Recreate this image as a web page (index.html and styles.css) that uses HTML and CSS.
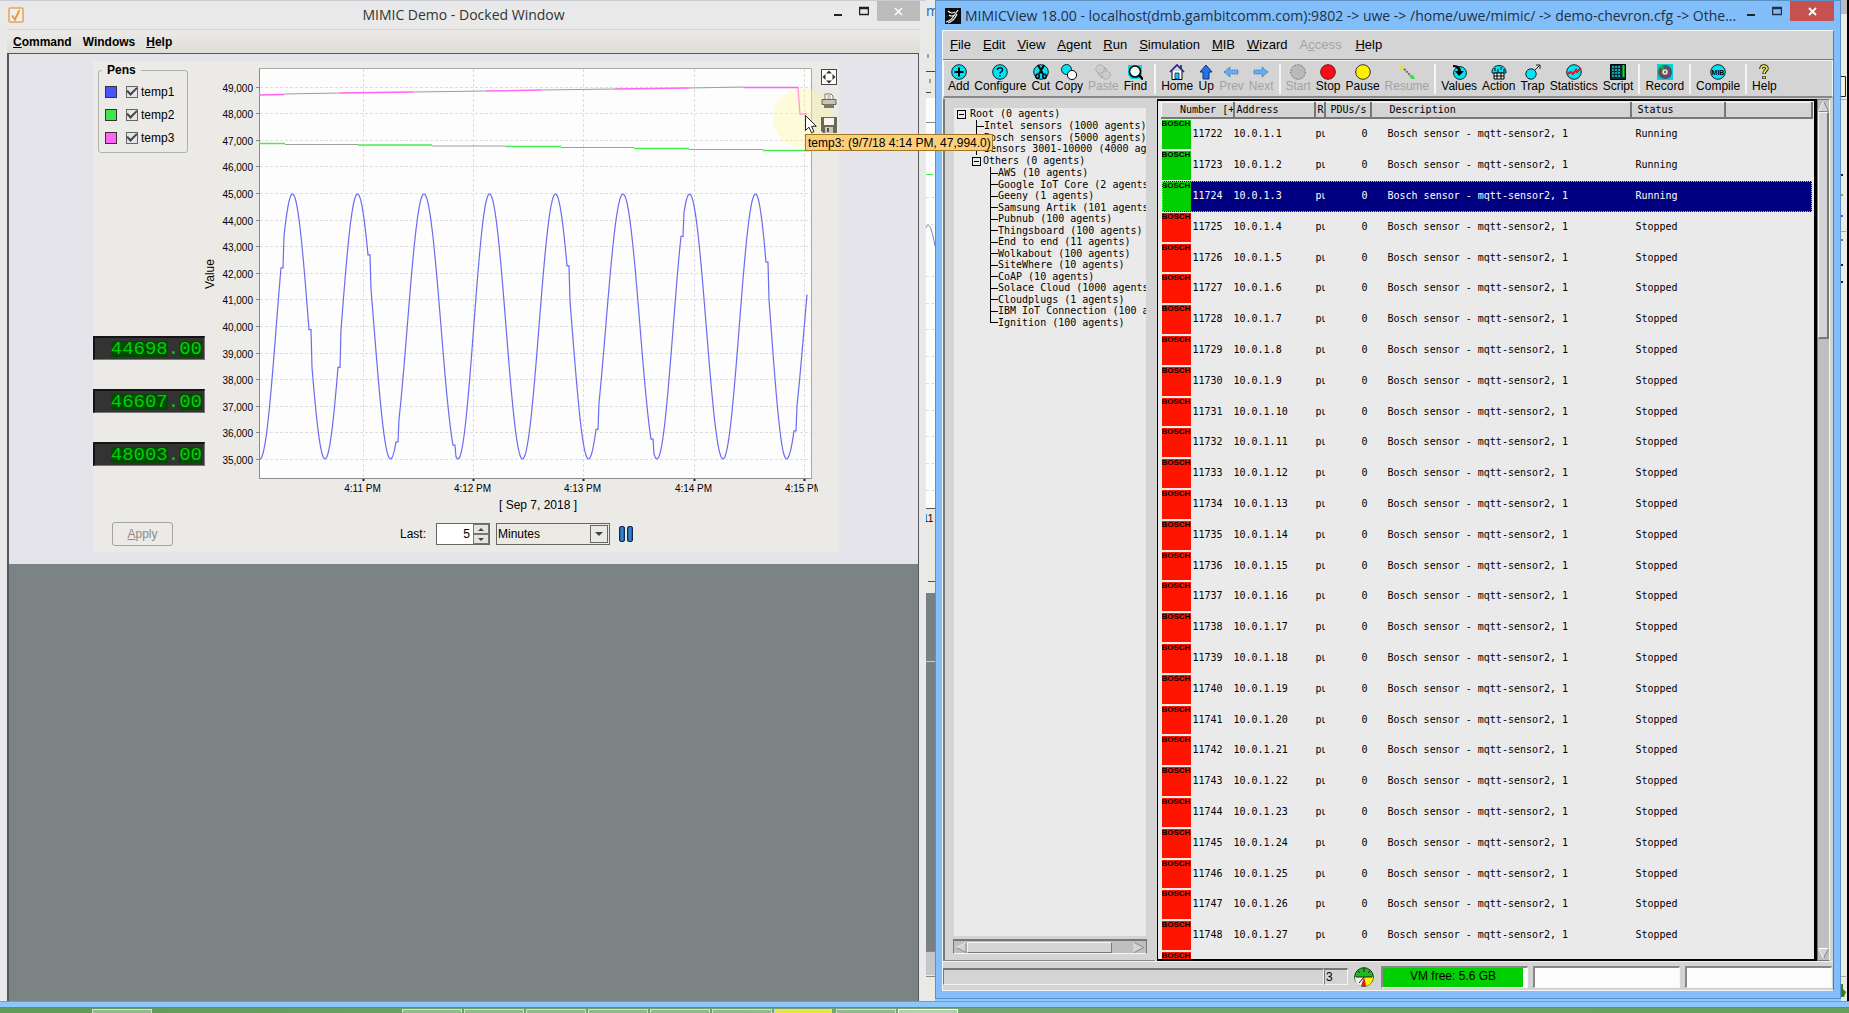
FILE: index.html
```html
<!DOCTYPE html>
<html lang="en">
<head>
<meta charset="utf-8">
<title>MIMICView desktop</title>
<link rel="stylesheet" href="styles.css">
</head>
<body>
<div class="desktop">
  <section class="win demo">
    <header class="titlebar demo-title">
      <svg class="app-icon" width="16" height="16" viewBox="0 0 16 16"><rect x="1" y="1" width="14" height="14" rx="1" fill="#eef0f4" stroke="#eba24e" stroke-width="1.5"/><path d="M4 8.500l3 4L11.500 3" fill="none" stroke="#f29a32" stroke-width="2"/></svg>
      <h1 class="demo-name">MIMIC Demo - Docked Window</h1>
      <div class="win-buttons">
        <button class="wb" aria-label="Minimize"><svg width="10" height="12"><rect x="1" y="9" width="8" height="2" fill="#222"/></svg></button>
        <button class="wb" aria-label="Maximize"><svg width="10" height="12"><path d="M.5 3.500h9v6h-9zM0 2.500h10" fill="none" stroke="#222" stroke-width="1.500"/></svg></button>
        <button class="wb close gray" aria-label="Close"><svg width="9" height="9"><path d="M1 1l7 7M8 1l-7 7" stroke="#fff" stroke-width="1.500"/></svg></button>
      </div>
    </header>
    <nav class="demo-menu"><a href="#"><u>C</u>ommand</a><a href="#">Windows</a><a href="#"><u>H</u>elp</a></nav>
    <main class="demo-body">
      <div class="dock">
        <div class="panel">
          <div class="side">
            <fieldset class="pens">
              <legend>Pens</legend>
              <label><i class="swatch blue"></i><input type="checkbox" checked>temp1</label>
              <label><i class="swatch green"></i><input type="checkbox" checked>temp2</label>
              <label><i class="swatch pink"></i><input type="checkbox" checked>temp3</label>
            </fieldset>
            <div class="meters">
              <output class="lcd"><span>44698</span>.<span>00</span></output>
              <output class="lcd"><span>46607</span>.<span>00</span></output>
              <output class="lcd"><span>48003</span>.<span>00</span></output>
            </div>
          </div>
          <svg class="chart" width="618" height="454" viewBox="0 0 618 454">
            <rect x="59" y="7" width="552" height="411" fill="#fdfdfd"/>
            <g id="grid"></g>
            <path d="M59.500 7v411M59 417.500h553" stroke="#8c8c8c" fill="none"/>
            <path d="M59 7.500h552.500v410" stroke="#aaa" fill="none"/>
            <path d="M84 33l55-1M213 31l73-1M341 29l74-1M489 27l55-1M85 83.500h73M232 85h73M361 86.500h73M489 88.500h74" stroke="#9d9d9d" fill="none"/>
            <path d="M59 34l25-.500M139 32l74-1M286 30l55-1M415 28l74-1M544 26.500h54l2 26.500h7" stroke="#ff62f4" stroke-width="1.300" fill="none"/>
            <path d="M59 82.500h26M158 84h74M305 85.500h56M434 87.500h55M563 89.500h46" stroke="#47ee52" stroke-width="1.500" fill="none"/>
            <polyline id="trace" fill="none" stroke="#6b6bf2" stroke-width="1.200"/>
            <g id="labels"></g>
            <text class="axis-title" transform="translate(14 213) rotate(-90)">Value</text>
            <text class="axis-title" x="338" y="448">[ Sep 7, 2018 ]</text>
          </svg>
          <div class="tools">
            <i class="halo"></i>
            <button aria-label="Zoom to fit"><svg width="16" height="16"><rect x=".5" y=".5" width="15" height="15" fill="#fff" stroke="#444"/><path d="M8 1.500l3 3H5zM8 14.500l3-3H5zM1.500 8l3-3v6zM14.500 8l-3-3v6z" fill="#333"/></svg></button>
            <button aria-label="Print"><svg width="16" height="16"><path d="M4 7V1h6l2 2v4" fill="#fff" stroke="#77775f"/><path d="M6 3h4M6 5h4" stroke="#999"/><path d="M1 6.500h14v5H1z" fill="#c6c6b2" stroke="#66664f"/><path d="M3 11h10v4H3z" fill="#7a7a64"/></svg></button>
            <button aria-label="Save"><svg width="16" height="16"><path d="M0 0h16v16H2l-2-2z" fill="#6a6955"/><path d="M3 1h10v7H3z" fill="#f6f6ef"/><path d="M4 10h8v6H4z" fill="#c7c7ba"/><path d="M6 11h2v4H6z" fill="#555546"/></svg></button>
            <svg class="pointer" width="12" height="19"><path d="M.5.500v15l3.500-3.300 2.500 5.500 2.500-1.100-2.500-5.300h4.800z" fill="#fff" stroke="#222"/></svg>
            <div class="tip" role="tooltip">temp3: (9/7/18 4:14 PM, 47,994.0)</div>
          </div>
          <div class="controls">
            <button class="apply" disabled><u>A</u>pply</button>
            <label class="last" for="span">Last:</label>
            <span class="spinner"><input id="span" type="text" value="5"><span class="steps"><button aria-label="More"><i class="tri-up"></i></button><button aria-label="Less"><i class="tri-down"></i></button></span></span>
            <span class="combo"><select aria-label="Unit"><option>Minutes</option></select><b><i class="tri-down"></i></b></span>
            <button class="pause" aria-label="Pause"><svg width="14" height="16"><defs><linearGradient id="pb"><stop offset="0" stop-color="#124a86"/><stop offset=".5" stop-color="#3f8fd8"/><stop offset="1" stop-color="#124a86"/></linearGradient></defs><rect x=".5" y=".5" width="5" height="15" rx="1.500" fill="url(#pb)" stroke="#0d2a55"/><rect x="8.500" y=".5" width="5" height="15" rx="1.500" fill="url(#pb)" stroke="#0d2a55"/></svg></button>
          </div>
        </div>
      </div>
    </main>
  </section>

  <div class="behind">
    <svg width="9" height="1001">
      <rect width="9" height="1001" fill="#eae9e4"/><rect width="9" height="22" fill="#e9eaec"/>
      <text class="frag" x="0" y="16">m</text>
      <path d="M0 71.500h9M0 92.500h5" stroke="#444"/><path d="M2 54v4M4 79v4" stroke="#555"/>
      <rect y="98" width="9" height="410" fill="#fdfdfd"/><path d="M0 122.500h9" stroke="#888"/>
      <path d="M0 197.500h9M0 224.500h9M0 276.500h9M0 303.500h9M0 329.500h9M0 356.500h9M0 383.500h9M0 410.500h9M0 436.500h9M0 463.500h9M0 490.500h9" stroke="#ddd" stroke-dasharray="3 2"/>
      <path d="M0 174.500h7" stroke="#47ee52"/><path d="M0 228c2-6 5-4 9 18" stroke="#77b" fill="none"/>
      <path d="M0 508.500h9" stroke="#555"/><text class="frag-axis" x="-3" y="522">11</text><path d="M2 581.500h7" stroke="#555"/>
      <rect y="593" width="9" height="358" fill="#778082"/><path d="M0 661.500h9" stroke="#ccc"/>
      <rect y="951" width="9" height="24" fill="#c5c6c7"/><path d="M0 951.500h9M0 976.500h9" stroke="#888"/>
    </svg>
  </div>

  <section class="win view">
    <header class="titlebar view-title">
      <svg class="app-icon" width="16" height="16"><rect width="16" height="16" fill="#0a0a0a"/><path d="M1 14c6-2 7-5 12-12M3 15c5-2 7-4 9-9M3 3c3 3 5 2 7 1M4 7c2 2 4 1 6 0" stroke="#f2f2f2" fill="none" stroke-width="1.200"/></svg>
      <h1>MIMICView 18.00 - localhost(dmb.gambitcomm.com):9802 -&gt; uwe -&gt; /home/uwe/mimic/ -&gt; demo-chevron.cfg -&gt; Othe...</h1>
      <div class="win-buttons">
        <button class="wb" aria-label="Minimize"><svg width="10" height="12"><rect x="1" y="9" width="8" height="2" fill="#222"/></svg></button>
        <button class="wb" aria-label="Maximize"><svg width="10" height="12"><path d="M.5 3.500h9v6h-9zM0 2.500h10" fill="none" stroke="#234" stroke-width="1.500"/></svg></button>
        <button class="wb close red" aria-label="Close"><svg width="9" height="9"><path d="M1 1l7 7M8 1l-7 7" stroke="#fff" stroke-width="1.800"/></svg></button>
      </div>
    </header>
    <div class="view-body">
      <nav class="view-menu"><a href="#"><u>F</u>ile</a><a href="#"><u>E</u>dit</a><a href="#"><u>V</u>iew</a><a href="#"><u>A</u>gent</a><a href="#"><u>R</u>un</a><a href="#"><u>S</u>imulation</a><a href="#"><u>M</u>IB</a><a href="#"><u>W</u>izard</a><a href="#" class="off">A<u>c</u>cess</a><a href="#"><u>H</u>elp</a></nav>
      <div class="toolbar">
        <button><svg><circle cx="8" cy="8" r="7.300" class="cy"/><path d="M8 3.500v9M3.500 8h9" stroke="#000" stroke-width="2"/></svg>Add</button>
        <button><svg><circle cx="8" cy="8" r="7.300" class="cy"/><path d="M5.500 6c0-3 5-3 5 0 0 1.600-2.500 1.700-2.500 3.500M8 11v1.600" fill="none" stroke="#013" stroke-width="1.600"/></svg>Configure</button>
        <button><svg><circle cx="8" cy="8" r="7.300" class="cy"/><path d="M5 1l5 9M11 1L6 10M8 5v4" stroke="#000" stroke-width="2"/><path d="M4.500 10a1.800 2.200 0 1 0 .1 0M11.500 10a1.800 2.200 0 1 0 .1 0" fill="#0bd" stroke="#000" stroke-width="1.500"/></svg>Cut</button>
        <button><svg><circle cx="5.500" cy="5.500" r="5" class="cy"/><circle cx="11" cy="11" r="4.600" fill="#fff" stroke="#000"/></svg>Copy</button>
        <button class="off"><svg><g fill="#ccc" stroke="#999" stroke-dasharray="1.500 1"><circle cx="5" cy="5" r="4.200"/><circle cx="11" cy="11" r="4.200"/></g><path d="M3 9l4 5M9 3l3 3" stroke="#999"/></svg>Paste</button>
        <button><svg><path d="M1 1h14v10l-3 4H4l-3-4z" fill="#00d9e8"/><circle cx="8" cy="7.500" r="5.500" fill="#eff" stroke="#000" stroke-width="1.600"/><path d="M12 11l4 4.500" stroke="#000" stroke-width="2.500"/></svg>Find</button>
        <hr class="first-sep">
        <button><svg><path d="M3 7v8.500h10V7" fill="#fff" stroke="#000"/><path d="M1 8l7-7 7 7M12 1v4" fill="none" stroke="#22228a" stroke-width="1.700"/><path d="M6 9h4v6H6z" fill="#0cf" stroke="#224" stroke-width=".8"/></svg>Home</button>
        <button><svg><path d="M8 1l6 7h-3v7H5V8H2z" fill="#2772e8" stroke="#102e7c"/></svg>Up</button>
        <button class="off"><svg><path d="M1 8l6-5v3h8v4H7v3z" fill="#65adf5" stroke="#4673b8" stroke-dasharray="1.500 1"/></svg>Prev</button>
        <button class="off"><svg><path d="M15 8L9 3v3H1v4h8v3z" fill="#65adf5" stroke="#4673b8" stroke-dasharray="1.500 1"/></svg>Next</button>
        <hr>
        <button class="off"><svg><circle cx="8" cy="8" r="7.300" fill="#b9b9b9" stroke="#777" stroke-dasharray="2 1"/></svg>Start</button>
        <button><svg><circle cx="8" cy="8" r="7.300" fill="#fa0d1b" stroke="#7c0a10"/></svg>Stop</button>
        <button><svg><circle cx="8" cy="8" r="7.300" fill="#fff000" stroke="#333"/></svg>Pause</button>
        <button class="off"><svg><path d="M3 1v6M0 4h6M1 2l4 4M5 2L1 6" stroke="#efe022"/><path d="M5 5l7 7" stroke="#666" stroke-dasharray="2 1" stroke-width="2"/><path d="M10 11h4l2 4h-4z" fill="#3ce04c"/></svg>Resume</button>
        <hr>
        <button><svg><circle cx="9" cy="9" r="6.400" class="cy"/><path d="M2 1c6 0 8 3 8 6h3l-5 5-4-5h3c0-2-2-4-5-4z" fill="#000"/></svg>Values</button>
        <button><svg><path d="M1 9c-1-10 15-10 14 0z" class="cy"/><path d="M3 9h10v6H3z" fill="#eee" stroke="#000"/><path d="M6 9v6M10 9v6M3 12h10M4 4v3M7 5v3M10 3v3M13 5v3" stroke="#000"/></svg>Action</button>
        <button><svg><circle cx="6" cy="10" r="5.200" class="cy"/><path d="M10 6l5-5M11 1h4v4" fill="none" stroke="#222"/></svg>Trap</button>
        <button><svg><circle cx="8" cy="8" r="7.300" class="cy"/><path d="M1 10l4-2 2 2 3-4 1 2 4-4" fill="none" stroke="#e8152b" stroke-width="2"/></svg>Statistics</button>
        <button><svg><path d="M.5.500h15v15H.5z" fill="#08283a" stroke="#000"/><path d="M2 3h9M2 6h9M2 9h9M2 12h9" stroke="#00d6d6" stroke-width="1.500" stroke-dasharray="2 1"/><path d="M13.500 1v12" stroke="#0e0" stroke-width="2"/></svg>Script</button>
        <hr>
        <button><svg><path d="M0 0h16v16H0z" fill="#00cfdc"/><circle cx="8" cy="8" r="7" fill="#555"/><path d="M8 8L2 3l4-2z" fill="#1aab2f"/><path d="M8 8l6 4-2 2z" fill="#8b2fae"/><circle cx="8" cy="8" r="2.800" fill="#ddd"/><circle cx="8" cy="8" r="1" fill="#444"/></svg>Record</button>
        <hr>
        <button><svg><circle cx="8" cy="8" r="7.300" class="cy"/><text x="8" y="11" class="mib">MIB</text></svg>Compile</button>
        <hr>
        <button><svg><path d="M5 5c0-4 6-4 6-.500 0 2-3 2-3 5.500M8 12v3" fill="none" stroke="#222" stroke-width="3.500"/><path d="M5 5c0-4 6-4 6-.500 0 2-3 2-3 5M8 12.500v2" fill="none" stroke="#fff04a" stroke-width="1.600"/></svg>Help</button>
      </div>
      <div class="panes">
        <aside class="tree-pane">
          <div class="tree-canvas">
            <ul class="tree">
              <li><div class="root"><i class="fold"></i>Root (0 agents)</div>
                <ul>
                  <li>Intel sensors (1000 agents)</li>
                  <li>Bosch sensors (5000 agents)</li>
                  <li>Sensors 3001-10000 (4000 agents)</li>
                  <li class="open"><div class="branch"><i class="fold"></i>Others (0 agents)</div>
                    <ul>
                      <li>AWS (10 agents)</li><li>Google IoT Core (2 agents)</li><li>Geeny (1 agents)</li><li>Samsung Artik (101 agents)</li><li>Pubnub (100 agents)</li><li>Thingsboard (100 agents)</li><li>End to end (11 agents)</li><li>Wolkabout (100 agents)</li><li>SiteWhere (10 agents)</li><li>CoAP (10 agents)</li><li>Solace Cloud (1000 agents)</li><li>Cloudplugs (1 agents)</li><li>IBM IoT Connection (100 agents)</li><li>Ignition (100 agents)</li>
                    </ul>
                  </li>
                </ul>
              </li>
            </ul>
          </div>
          <div class="hbar"><svg width="12" height="11"><path d="M11 .5v10L1 5.500z" fill="#d4d4d4" stroke="#888"/><path d="M11 .5L1 5.500" stroke="#fff"/></svg><i class="hthumb"></i><svg width="12" height="11"><path d="M1 .5v10l10-5z" fill="#d4d4d4" stroke="#888"/><path d="M1 10V.5" stroke="#fff"/></svg></div>
        </aside>
        <div class="list">
          <table>
            <colgroup><col class="c-logo"><col class="c-num"><col class="c-addr"><col class="c-r"><col class="c-pdu"><col class="c-desc"><col class="c-stat"><col></colgroup>
            <thead><tr><th colspan="2" class="h-num">Number [+</th><th>Address</th><th>R</th><th class="right">PDUs/s</th><th class="h-desc">Description</th><th class="h-stat">Status</th><th></th></tr></thead>
            <tbody id="agents"></tbody>
          </table>
        </div>
        <div class="vbar"><svg width="11" height="11"><path d="M5.500 .5l5 10H.5z" fill="#d4d4d4" stroke="#888"/><path d="M5.500 .5L.5 10.500" stroke="#fff"/></svg><i class="vthumb"></i><svg width="11" height="11"><path d="M5.500 10.500L.5.500h10z" fill="#d4d4d4" stroke="#888"/><path d="M5.500 10.500L.5.500h10" stroke="#fff" fill="none"/></svg></div>
      </div>
      <footer class="status">
        <span class="sunk message"></span><span class="sunk count">3</span>
        <svg class="gauge" width="20" height="20"><circle cx="10" cy="10" r="9.300" fill="#1fb81f" stroke="#222"/><path d="M10 10l9 0c0 5-3 8-7 9z" fill="#ffef00"/><path d="M10 10l2 9H7z" fill="#f01818"/><path d="M10 10l-3 9c-4-1-6-4-6-9z" fill="#eee"/><path d="M10 10l-5 6M10 1v4M4 4l2 2M16 4l-2 2M2 10h16" stroke="#222"/></svg>
        <span class="field"><b class="vm">VM free: 5.6 GB</b></span><span class="field"></span><span class="field"></span>
      </footer>
    </div>
  </section>
  <div class="edge"><svg width="8" height="1001"><rect width="6" height="1001" fill="#ebeae6"/><path d="M0 0h6v14H0z" fill="#bbb"/><path d="M0 76.500h4.500v20H0" fill="#f8eedd" stroke="#222"/><path d="M0 99.500h5M0 231.500h5M0 976.500h5" stroke="#aaa"/><path d="M0 174h2v2H0zM0 264h2v2H0zM0 281h2v2H0z" fill="#222"/><path d="M0 194h2v2H0z" fill="#c89020"/><path d="M0 215h2v2H0z" fill="#5a5ac8"/><path d="M0 239h2v2H0z" fill="#777"/><path d="M0 984h2v5l3 3-2 5H0z" fill="#39801f"/><rect x="6" width="2" height="1001" fill="#000"/></svg></div>
</div>
<div class="band"></div>
<footer class="taskbar"><i class="first"></i><i class="second"></i><i></i><i></i><i></i><i></i><i></i><i class="active"></i><i></i><i class="bright"></i></footer>
<script src="app.js"></script>
</body>
</html>
```
FILE: app.js
```js
const NS = 'http://www.w3.org/2000/svg';
const add = (parent, name, attrs, text) => {
  const el = document.createElementNS(NS, name);
  for (const k in attrs) el.setAttribute(k, attrs[k]);
  if (text) el.textContent = text;
  parent.append(el);
};

// axes
const grid = document.getElementById('grid');
const labels = document.getElementById('labels');
for (let v = 35; v <= 49; v++) {
  const y = Math.round(398 - (v - 35) * 26.6) + 0.5;
  add(grid, 'path', { d: `M60 ${y}h551`, class: 'gridline' });
  add(labels, 'path', { d: `M56 ${y}h3`, stroke: '#888' });
  add(labels, 'text', { x: 53, y: y + 4, class: 'tick end' }, `${v},000`);
}
[163, 273, 383, 494, 604].forEach((x, i) => {
  add(grid, 'path', { d: `M${x + 0.5} 8v409`, class: 'gridline' });
  add(labels, 'path', { d: `M${x + 0.5} 418v2`, stroke: '#222', 'stroke-width': 2 });
  add(labels, 'text', { x: x - 0.5, y: 431, class: 'tick' }, `4:1${i + 1} PM`);
});

// temp1: oscillates between 35,000 and 45,000, with short repeated samples
const low = [60, 125, 190.500, 258, 322.500, 388.500, 457, 523, 586.500, 652];
const high = [92.500, 157.500, 224, 289.500, 355.500, 423, 489.500, 555.500, 622];
const holds = [81, 109, 138, 168, 196, 253, 367, 396, 451, 481, 566, 594];
const turns = low.flatMap((x, i) => i < high.length ? [[x, 398], [high[i], 133]] : [[x, 398]]);
const at = x => {
  for (let i = 1; i < turns.length; i++) {
    const [a, ya] = turns[i - 1], [b, yb] = turns[i];
    if (x <= b) return ya + (yb - ya) * (1 - Math.cos(Math.PI * Math.max(0, x - a) / (b - a))) / 2;
  }
};
const points = [];
for (let x = 60; x <= 607; x++) {
  const h = holds.find(s => x > s && x <= s + 2);
  points.push(`${x},${at(h || x).toFixed(1)}`);
}
document.getElementById('trace').setAttribute('points', points.join(' '));

// agent list
const rows = [];
for (let n = 1; n <= 28; n++) {
  const running = n <= 3;
  const cells = n < 28
    ? `<td class="num">${11721 + n}</td><td>10.0.1.${n}</td><td class="r">pu</td><td class="right">0</td><td class="desc">Bosch sensor - mqtt-sensor2, 1</td><td class="stat">${running ? 'Running' : 'Stopped'}</td><td></td>`
    : '<td colspan="7"></td>';
  rows.push(`<tr class="${running ? 'running' : 'halted'}${n === 3 ? ' selected' : ''}"><td class="logo"><span>BOSCH</span></td>${cells}</tr>`);
}
document.getElementById('agents').innerHTML = rows.join('');
```
FILE: styles.css
```css
* { box-sizing: border-box; }
body { margin: 0; height: 100vh; display: flex; flex-direction: column; overflow: hidden; font: 12px "Liberation Sans", Arial, sans-serif; color: #000; background: #8cc6fb; }
h1, ul, fieldset { margin: 0; padding: 0; font-weight: normal; }
button { margin: 0; padding: 0; border: 0; background: none; font: inherit; color: inherit; }
a { color: inherit; text-decoration: none; }
ul { list-style: none; }
svg { display: block; flex: none; }

.desktop { flex: 1; min-height: 0; display: grid; grid-template-columns: minmax(0, 926fr) 9px minmax(0, 906fr) 8px; grid-template-rows: minmax(0, 1fr); }
.win { display: flex; flex-direction: column; min-width: 0; }
.behind, .edge { overflow: hidden; }
.frag { font: 14px "Open Sans", sans-serif; fill: #2b5fa0; }
.frag-axis { font: 10px "Liberation Sans", sans-serif; }

.titlebar { display: flex; align-items: center; flex: none; }
.titlebar h1 { flex: 1; min-width: 0; white-space: nowrap; overflow: hidden; font: 14px/22px "Open Sans", "Noto Sans", sans-serif; }
.win-buttons { display: flex; align-self: flex-start; }
.wb { width: 26px; height: 20px; display: grid; place-items: center; }
.close { width: 43px; }
.gray { background: #bcbcbc; }
.red { background: #c75050; }

/* demo window */
.demo { position: relative; z-index: 2; background: #e9e9e9; padding: 0 6px 0 7px; border-top: 1px solid #c9ccd2; }
.demo-title { height: 28px; color: #333; }
.demo-title .app-icon { margin-left: 1px; }
.titlebar .demo-name { text-align: center; padding-left: 78px; }
.demo-menu { height: 24px; padding: 0 6px; display: flex; align-items: center; gap: 11px; font-weight: bold; border-top: 1px solid #d5d5d5; background: linear-gradient(#ebeae7, #deddd7); }
.demo-body { flex: 1; min-height: 0; border: 1px solid #55585a; border-width: 1px 1px 0 2px; margin-right: 1px; background: #7b8385; }
.dock { height: 510px; padding: 7px 0 0 84px; background: #e4e4ea; }
.panel { width: 746px; height: 491px; display: grid; grid-template: 450px 41px / 107px 618px 21px; background: #ebeae6; }
.side { padding: 2px 0 0 5px; }
.pens { width: 90px; height: 90px; padding: 3px 6px; border: 1px solid #aeb0ae; border-radius: 3px; }
.pens legend { padding: 0 5px; margin-left: -3px; font-weight: bold; line-height: 14px; }
.pens label { display: flex; align-items: center; height: 23px; }
.swatch { width: 12px; height: 12px; border: 1px solid #333; margin-right: 9px; }
.blue { background: #4a53ff; }
.green { background: #3fe648; }
.pink { background: #ff66f6; }
.pens input { appearance: none; width: 12px; height: 12px; margin: 0 3px 0 0; border: 1px solid #666; display: grid; place-items: center; background: #e3e5e6; }
.pens input:checked::before { content: ""; width: 8px; height: 4px; border: solid #444; border-width: 0 0 2px 2px; transform: rotate(-45deg); margin-top: -3px; }
.meters { display: flex; flex-direction: column; gap: 29px; margin: 183px 0 0 -5px; }
.lcd { width: 112px; height: 24px; display: flex; align-items: center; justify-content: flex-end; padding-right: 2px; border: solid #151515; border-width: 2px 1px 1px 2px; border-right-color: #777; border-bottom-color: #777; background: #333; color: #00cf0a; font: 19px/16px "Liberation Mono", monospace; }
.lcd span { background: #004b00; height: 16px; }
.chart { overflow: hidden; }
.gridline { stroke: #dedede; stroke-dasharray: 3 2; fill: none; }
.tick { font: 10px "Liberation Sans", sans-serif; text-anchor: middle; }
.tick.end { text-anchor: end; }
.axis-title { font: 12px "Liberation Sans", sans-serif; text-anchor: middle; }
.tools { position: relative; display: flex; flex-direction: column; gap: 8px; padding: 8px 0 0 3px; }
.tools button { position: relative; width: 16px; height: 16px; }
.halo { position: absolute; left: -45px; top: 27px; width: 60px; height: 60px; border-radius: 50%; background: rgba(252, 246, 160, .38); }
.pointer { position: absolute; left: -13px; top: 54px; z-index: 2; }
.tip { position: absolute; left: -13px; top: 73px; z-index: 1; height: 17px; padding: 0 1px 0 2px; white-space: nowrap; font-size: 12px; line-height: 16px; border: 1px solid #a37823; background: #fccf7a; }
.controls { grid-column: 1 / -1; display: flex; align-items: center; padding-left: 19px; height: 24px; margin-top: 11px; }
.apply { width: 61px; height: 24px; border: 1px solid #a5a5a0; border-radius: 3px; color: #8c8c88; }
.last { margin-left: 227px; }
.spinner { display: flex; width: 54px; height: 22px; margin-left: 10px; border: 1px solid #666; background: #fff; }
.spinner input { flex: 1; min-width: 0; border: 0; padding: 0 3px; text-align: right; font: inherit; background: none; }
.steps { width: 16px; display: flex; flex-direction: column; background: #e5e5e0; }
.steps button { flex: 1; border: 1px solid #777; display: grid; place-items: center; }
.tri-up, .tri-down { border: 3px solid transparent; }
.tri-up { border-bottom-color: #444; border-top: 0; }
.tri-down { border-top-color: #444; border-bottom: 0; }
.combo { display: flex; width: 114px; height: 22px; margin-left: 6px; padding: 1px; border: 1px solid #666; background: #eae9e4; }
.combo select { flex: 1; min-width: 0; appearance: none; border: 0; padding: 0; font: inherit; background: none; color: #000; }
.combo b { width: 18px; border: 1px solid #666; display: grid; place-items: center; }
.combo .tri-down { border-width: 4px 4px 0; }
.pause { margin-left: 9px; }

/* agent browser window */
.view { background: #82bffa; border: 1px solid #5592cd; border-top-color: #5c8fc2; padding: 0 6px 7px; margin-bottom: 2px; }
.view-title { height: 29px; padding-left: 3px; color: #1d3045; }
.view-title h1 { margin-left: 4px; }
.view-title .close { width: 44px; }
.view-body { flex: 1; min-height: 0; display: flex; flex-direction: column; background: #d4d4d4; border: 1px solid #f5f5f5; border-right-color: #777; }
.view-menu { height: 29px; flex: none; display: flex; align-items: center; gap: 12px; padding: 0 7px 1px; font-size: 13px; border-bottom: 1px solid #777; }
.view-menu .off { margin-right: 2px; }
.off { color: #a3a3a3; }
.toolbar { height: 38px; flex: none; display: flex; gap: 5px; padding: 3px 4px 0; border: 1px solid #f5f5f5; border-bottom: 2px solid #888; }
.toolbar button { display: flex; flex-direction: column; align-items: center; height: 30px; line-height: 13px; white-space: nowrap; }
.toolbar svg { width: 16px; height: 16px; }
.toolbar hr { width: 2px; height: 30px; margin: 0; border: solid; border-width: 0 1px; border-color: #888 #f5f5f5; flex: none; }
.toolbar .first-sep { margin-left: 2px; }
.cy { fill: #00e5f2; stroke: #123; }
.mib { font: bold 7px "Liberation Sans", sans-serif; text-anchor: middle; }
.panes { flex: 1; min-height: 0; display: flex; margin-top: 1px; padding-right: 3px; border-bottom: 1px solid #f5f5f5; }
.tree-pane { width: 212px; flex: none; display: flex; flex-direction: column; padding: 9px 8px 6px; border-left: 2px solid #777; border-bottom: 1px solid #888; }
.tree-canvas { flex: 1; min-height: 0; margin: 0 1px; overflow: hidden; background: #eaeaea; }
.tree { font: 10px/12px "DejaVu Sans Mono", monospace; white-space: nowrap; }
.root, .branch, .tree ul li:not(.open) { display: flex; align-items: center; height: 12px; }
.tree ul > li:nth-child(even):not(.open) { height: 11px; }
.root { padding-left: 3px; }
.fold { flex: none; width: 9px; height: 9px; margin-right: 4px; border: 1px solid #000; background: linear-gradient(#000, #000) center / 5px 1px no-repeat; }
.tree ul { margin-left: 22px; }
.tree li li:not(.open)::before { content: ""; flex: none; width: 8px; height: 100%; background: linear-gradient(#000, #000) 0 0 / 1px 100% no-repeat, linear-gradient(#000, #000) 0 50% / 8px 1px no-repeat; }
.tree li li li:last-child::before { background-size: 1px 50%, 8px 1px; }
.branch { margin-left: -4px; }
.branch .fold { margin-right: 2px; }
.tree ul ul { margin-left: 14px; }
.hbar { display: flex; align-items: center; height: 15px; margin-top: 3px; padding: 0 1px; border: 1px solid #777; border-width: 2px 1px 1px; border-bottom-color: #f5f5f5; background: #bfbfbf; }
.hthumb { width: 145px; height: 11px; margin: 0 auto 0 0; border: 1px solid #f5f5f5; border-right-color: #777; border-bottom-color: #777; background: #d4d4d4; }
.list { flex: 1; min-width: 0; overflow: hidden; margin-left: 2px; border: 2px solid #000; border-width: 2px 3px 2px 1px; padding: 1px 1px 0 3px; background: #eaeaea; }
.list table { width: 100%; table-layout: fixed; border-collapse: collapse; font: 10px/12px "DejaVu Sans Mono", monospace; }
.c-logo { width: 30px; } .c-num { width: 42px; } .c-addr { width: 81px; } .c-r { width: 10px; } .c-pdu { width: 46px; } .c-desc { width: 260px; } .c-stat { width: 94px; }
th, td { padding: 0; text-align: left; overflow: hidden; white-space: nowrap; font-weight: normal; }
th { height: 15px; padding-left: 2px; background: #d4d4d4; border: 1px solid #f5f5f5; border-right: 2px solid #777; border-bottom: 2px solid #777; line-height: 11px; }
.h-num { padding-left: 18px; }
.h-desc { padding-left: 18px; }
.h-stat { padding-left: 6px; }
.right { text-align: right; padding-right: 3px; }
tbody tr { height: 31px; }
tbody tr:nth-child(5n) { height: 30px; }
.num { padding-left: 1px; }
.logo { vertical-align: top; padding: 1px 1px 1px 0; }
.logo span { display: block; height: 29px; width: 29px; overflow: hidden; font: bold 8px/7px "Liberation Sans", sans-serif; color: #000; background: #ff1400; }
tr:nth-child(5n) .logo span { height: 28px; }
.running .logo span { background: #00d000; }
.selected { background: #000080; color: #fff; outline: 1px dotted #aab4ff; outline-offset: -1px; }
.desc { padding-left: 17px; }
.stat { padding-left: 5px; }
.r { padding-left: 1px; }
.vbar { width: 13px; flex: none; display: flex; flex-direction: column; align-items: center; padding: 1px 0; border: 1px solid #777; border-right-color: #f5f5f5; background: #bfbfbf; }
.vthumb { width: 11px; height: 26.5%; margin-bottom: auto; border: 1px solid #f5f5f5; border-right: 2px solid #777; border-bottom: 2px solid #777; background: #d4d4d4; }
.status { height: 28px; flex: none; display: flex; align-items: center; padding: 1px 1px 0 0; }
.sunk { height: 17px; border: 1px solid #f5f5f5; border-top: 2px solid #777; border-left: 1px solid #777; line-height: 14px; }
.message { flex: 1; }
.count { width: 24px; padding-left: 1px; }
.gauge { margin: 0 7px 0 6px; }
.field { width: 147px; height: 22px; margin-right: 5px; border: 1px solid #f5f5f5; border-top: 2px solid #888; border-left: 2px solid #888; background: #fdfdfd; }
.field:last-child { margin-right: 0; }
.vm { display: block; width: 140px; height: 19px; font-weight: normal; text-align: center; line-height: 17px; background: #00d000; }

.band { height: 7px; flex: none; border-top: 1px solid #6d9cc8; border-bottom: 1px solid #5b87a8; background: #8cc6fb; }
.taskbar { height: 5px; flex: none; display: flex; gap: 2px; padding-top: 1px; background: linear-gradient(90deg, #5f9a58, #75a672 50%, #63a05c); }
.taskbar i { width: 60px; border: 1px solid #cfe3cc; border-bottom: 0; background: #93b791; }
.taskbar .first { margin-left: 92px; }
.taskbar .second { margin-left: 248px; }
.taskbar .active { background: #efe04a; width: 58px; margin-right: 2px; }
.taskbar .bright { background: #b4cdb2; border-color: #fff; }
```
